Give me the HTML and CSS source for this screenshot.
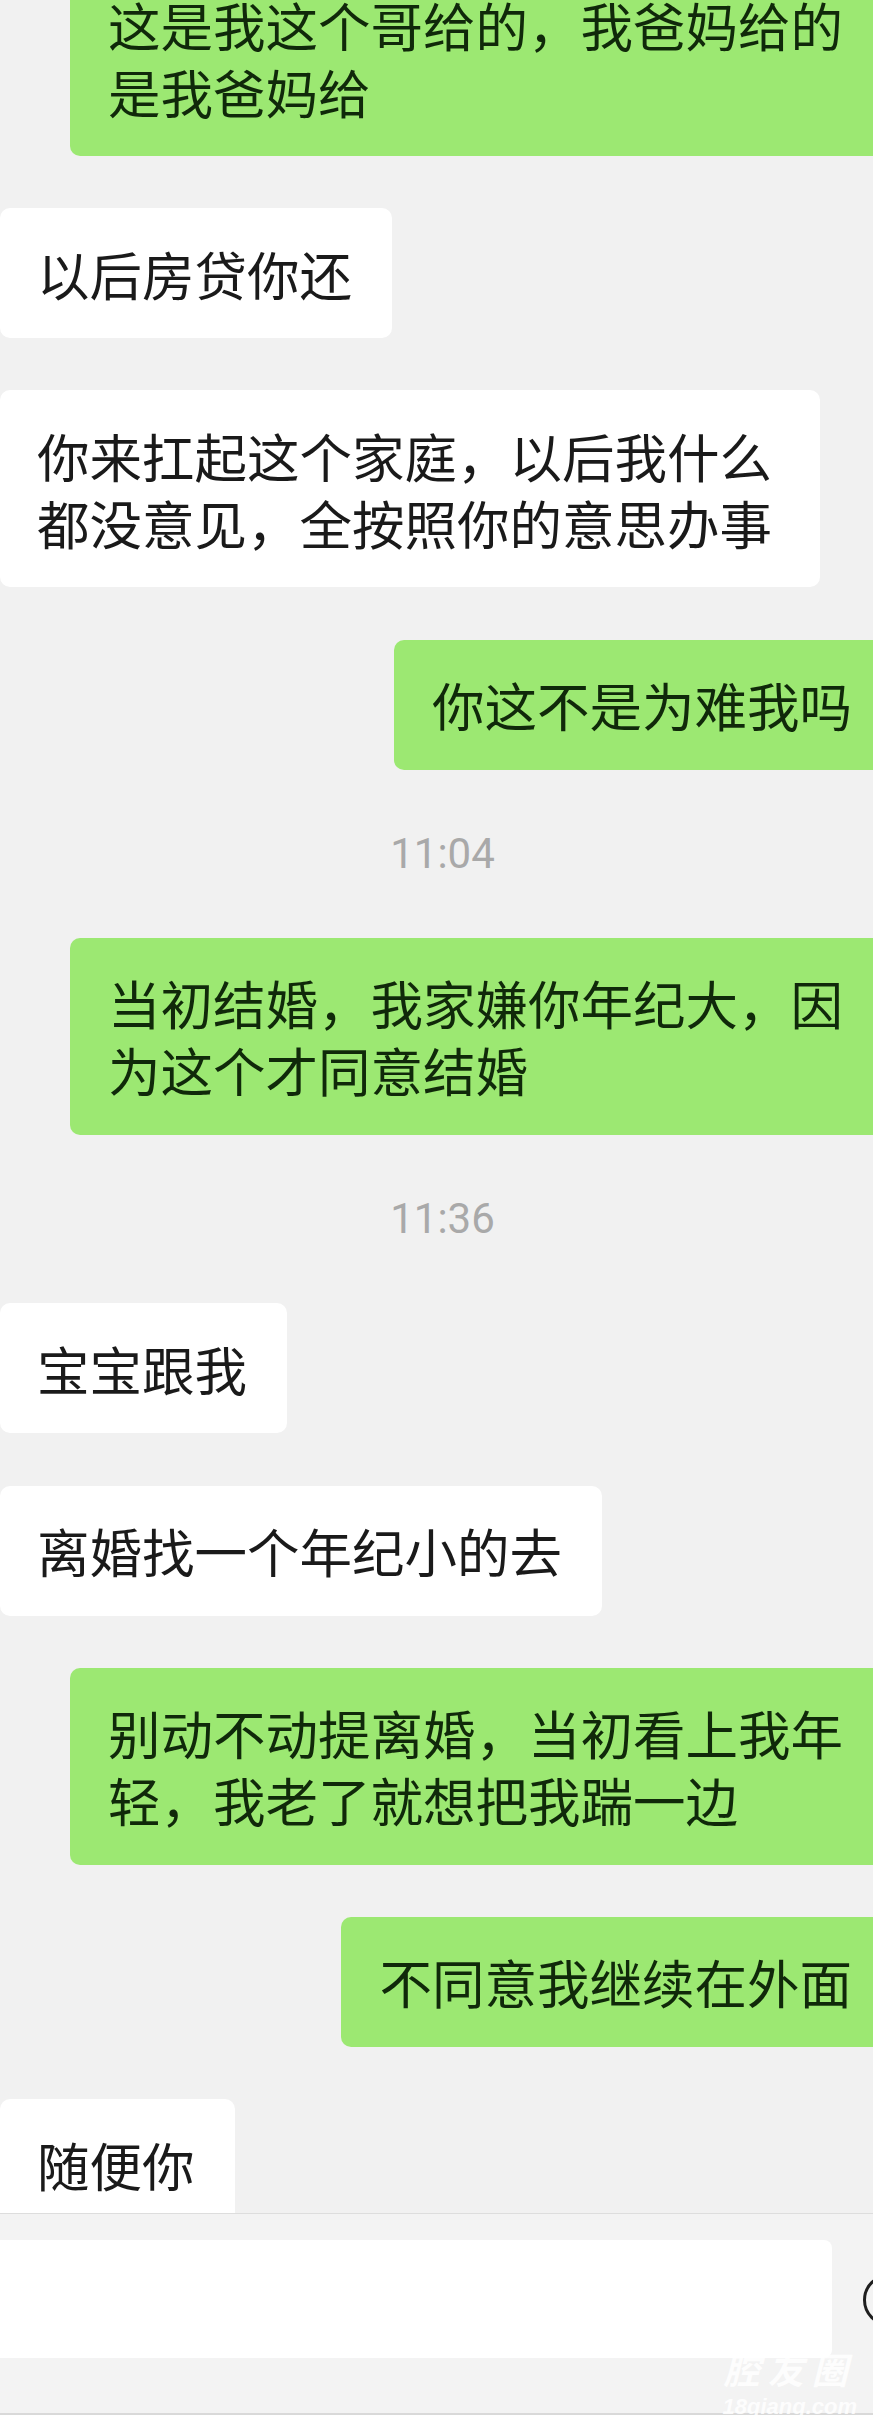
FILE: index.html
```html
<!DOCTYPE html>
<html lang="zh-CN">
<head>
    <meta charset="UTF-8">
    <title>聊天</title>
    <link rel="stylesheet" href="styles.css">
</head>
<body>
    <div class="chat">
        <div class="msgs">
            <div class="row me"><div class="bubble">这是我这个哥给的，我爸妈给的是我爸妈给</div></div>
            <div class="row them"><div class="bubble">以后房贷你还</div></div>
            <div class="row them"><div class="bubble">你来扛起这个家庭，以后我什么都没意见，全按照你的意思办事</div></div>
            <div class="row me"><div class="bubble">你这不是为难我吗</div></div>
            <div class="time">11:04</div>
            <div class="row me"><div class="bubble">当初结婚，我家嫌你年纪大，因为这个才同意结婚</div></div>
            <div class="time">11:36</div>
            <div class="row them"><div class="bubble">宝宝跟我</div></div>
            <div class="row them"><div class="bubble">离婚找一个年纪小的去</div></div>
            <div class="row me"><div class="bubble">别动不动提离婚，当初看上我年轻，我老了就想把我踹一边</div></div>
            <div class="row me"><div class="bubble">不同意我继续在外面</div></div>
            <div class="row them"><div class="bubble">随便你</div></div>
        </div>
    </div>
    <div class="bar">
        <div class="input"></div>
        <div class="emoji"></div>
        <div class="mark">
            <div class="mark-cn">腔友圈</div>
            <div class="mark-en">18qiang.com</div>
        </div>
    </div>
</body>
</html>
```

FILE: styles.css
```css
* {
    margin: 0;
    padding: 0;
    box-sizing: border-box;
}
body {
    width: 873px;
    overflow: hidden;
    background: #f1f1f1;
    font-family: "Noto Sans CJK SC", sans-serif;
}
/*消息区*/
.chat {
    height: 2213px;
    overflow: hidden;
}
.msgs {
    display: flex;
    flex-direction: column;
    gap: 52.2px;
    margin-top: -41px;
}
.row {
    display: flex;
}
.row.me {
    justify-content: flex-end;
    margin-right: -17px;
}
.bubble {
    max-width: 820px;
    padding: 31.5px 40px 31.5px 37px;
    border-radius: 10px;
    font-size: 52.5px;
    line-height: 67px;
    background: #fff;
    color: #1a1a1a;
}
.me .bubble {
    padding: 31.5px 38px;
    background: #9ce872;
    color: #10290a;
}
.time {
    height: 64px;
    line-height: 64px;
    padding-left: 12px;
    text-align: center;
    font-family: Roboto, "Liberation Sans", sans-serif;
    font-size: 42px;
    color: #a9a9a9;
}
/*输入栏*/
.bar {
    position: relative;
    display: flex;
    align-items: flex-start;
    height: 202px;
    padding-top: 26px;
    border-top: 1px solid #dddddd;
    border-bottom: 2px solid #d9d9d9;
    background: #f3f3f3;
}
.input {
    width: 840px;
    height: 118px;
    margin-left: -8px;
    border-radius: 8px;
    background: #fff;
    flex: none;
}
.emoji {
    flex: none;
    width: 52px;
    height: 52px;
    margin: 34px 0 0 31px;
    border: 3px solid #1e1e1e;
    border-radius: 50%;
}
.mark {
    position: absolute;
    right: 16px;
    top: 128px;
    display: flex;
    flex-direction: column;
    align-items: center;
    color: rgba(255, 255, 255, 0.85);
    font-style: italic;
    font-weight: bold;
}
.mark-cn {
    font-size: 36px;
    line-height: 52px;
    letter-spacing: 8px;
}
.mark-en {
    font-family: "Liberation Sans", sans-serif;
    font-size: 22px;
    line-height: 26px;
}
```
